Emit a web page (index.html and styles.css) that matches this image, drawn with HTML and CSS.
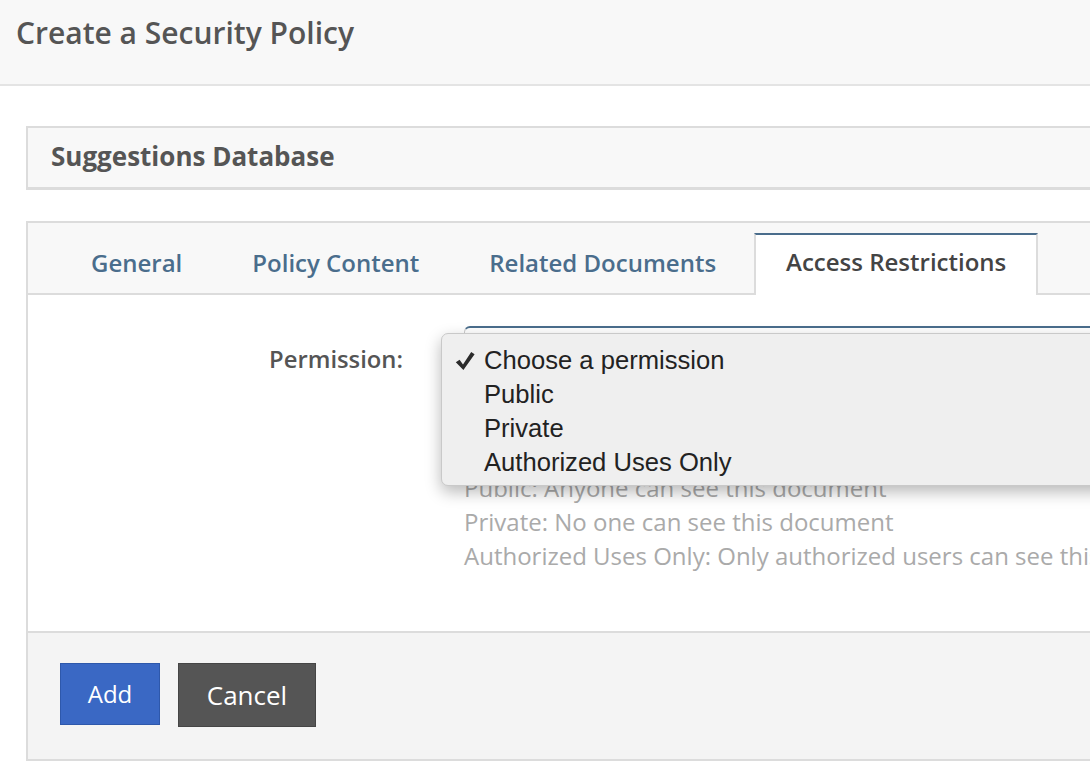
FILE: index.html
```html
<!DOCTYPE html>
<html lang="en">
<head>
<meta charset="utf-8">
<title>Create a Security Policy</title>
<link rel="stylesheet" href="styles.css">
</head>
<body>
<header class="page-header">
  <h1 class="page-title">Create a Security Policy</h1>
</header>
<main class="content">
  <section class="db-panel">
    <h2 class="db-title">Suggestions Database</h2>
  </section>
  <section class="tabs-panel">
    <nav class="tab-bar">
      <a class="tab">General</a>
      <a class="tab">Policy Content</a>
      <a class="tab">Related Documents</a>
      <a class="tab tab-active">Access Restrictions</a>
    </nav>
    <div class="tab-body">
      <div class="form-row">
        <label class="field-label">Permission:</label>
        <div class="field">
          <div class="select-box"></div>
          <div class="help">
            <div>Public: Anyone can see this document</div>
            <div>Private: No one can see this document</div>
            <div>Authorized Uses Only: Only authorized users can see this document</div>
          </div>
        </div>
      </div>
    </div>
    <div class="form-footer">
      <button class="btn btn-add">Add</button>
      <button class="btn btn-cancel">Cancel</button>
    </div>
  </section>
</main>
<div class="menu">
  <div class="menu-item selected"><svg class="check" width="20" height="20" viewBox="0 0 20 20"><path d="M0.8 11.2 L4.6 8.8 L8 13.4 L16.2 1 L19.6 3.2 L8.4 19 Z" fill="#2b2b2b"/></svg>Choose a permission</div>
  <div class="menu-item">Public</div>
  <div class="menu-item">Private</div>
  <div class="menu-item">Authorized Uses Only</div>
</div>
</body>
</html>
```
FILE: styles.css
```css
html, body {
  margin: 0;
  padding: 0;
}
body {
  width: 1090px;
  height: 766px;
  overflow: hidden;
  position: relative;
  background: #fff;
  font-family: "Open Sans", "Noto Sans", sans-serif;
  color: #555;
}
.page-header {
  height: 84px;
  background: #f8f8f8;
  border-bottom: 2px solid #e4e4e4;
  padding-left: 16px;
  display: flex;
  align-items: center;
}
.page-title {
  margin: 0 0 18px 0;
  font-size: 30px;
  font-weight: 600;
  color: #555;
  line-height: 38px;
}
.content {
  padding: 40px 0 0 26px;
  width: 1200px;
}
.db-panel {
  height: 59px;
  border: 2px solid #dcdcdc;
  border-bottom-width: 3px;
  background: #f8f8f8;
  display: flex;
  align-items: center;
  padding-left: 23px;
}
.db-title {
  margin: 0 0 4px 0;
  font-size: 26px;
  font-weight: 700;
  color: #555;
  line-height: 34px;
}
.tabs-panel {
  margin-top: 31px;
  border: 2px solid #dcdcdc;
}
.tab-bar {
  height: 70px;
  background: #f8f8f8;
  border-bottom: 2px solid #dcdcdc;
  display: flex;
  align-items: flex-end;
  padding-left: 28px;
}
.tab {
  height: 60px;
  padding: 0 33px 8px;
  border: 2px solid transparent;
  border-bottom: none;
  margin-bottom: -2px;
  box-sizing: border-box;
  font-size: 24px;
  font-weight: 600;
  color: #4a6d8c;
  display: flex;
  align-items: center;
}
.tab-active {
  height: 62px;
  margin-left: 3px;
  margin-right: 3px;
  padding-left: 30px;
  padding-right: 30px;
  background: #fff;
  color: #444;
  border-color: #dcdcdc;
  border-top-color: #4a6d8c;
  padding-bottom: 8px;
}
.tab-body {
  height: 336px;
  box-sizing: border-box;
  padding-top: 31px;
}
.form-row {
  display: grid;
  grid-template-columns: 375px 1fr;
  column-gap: 61px;
}
.field-label {
  text-align: right;
  font-size: 23.8px;
  font-weight: 600;
  color: #555;
  line-height: 30px;
  padding-top: 18px;
}
.select-box {
  height: 40px;
  border: 1px solid #ccc;
  border-top: 2px solid #4a6d8c;
  border-radius: 6px 0 0 0;
  width: 800px;
}
.help {
  margin-top: 102px;
  font-size: 24px;
  line-height: 34px;
  color: #aaa;
  white-space: nowrap;
}
.form-footer {
  height: 128px;
  box-sizing: border-box;
  background: #f4f4f4;
  border-top: 2px solid #dcdcdc;
  padding: 30px 0 0 32px;
  display: flex;
  align-items: flex-start;
  gap: 18px;
}
.btn {
  font-family: "Open Sans", "Noto Sans", sans-serif;
  color: #fff;
  border-radius: 0;
  cursor: pointer;
  padding: 0;
}
.btn-add {
  width: 100px;
  height: 62px;
  background: #3a68c4;
  border: 1px solid #2e58ab;
  font-size: 24px;
  padding-bottom: 2px;
}
.btn-cancel {
  width: 138px;
  height: 64px;
  background: #555;
  border: 1px solid #454545;
  font-size: 26px;
}
.menu {
  position: absolute;
  left: 441px;
  top: 333px;
  width: 700px;
  height: 153px;
  box-sizing: border-box;
  background: #efefef;
  border: 1px solid #c9c9c9;
  border-radius: 7px;
  box-shadow: 0 6px 16px rgba(0, 0, 0, 0.28);
  padding-top: 9px;
}
.menu-item {
  position: relative;
  height: 34px;
  line-height: 34px;
  padding-left: 42px;
  font-family: "Liberation Sans", Arial, sans-serif;
  font-size: 25.6px;
  color: #222;
}
.check {
  position: absolute;
  left: 13px;
  top: 8px;
}
```
